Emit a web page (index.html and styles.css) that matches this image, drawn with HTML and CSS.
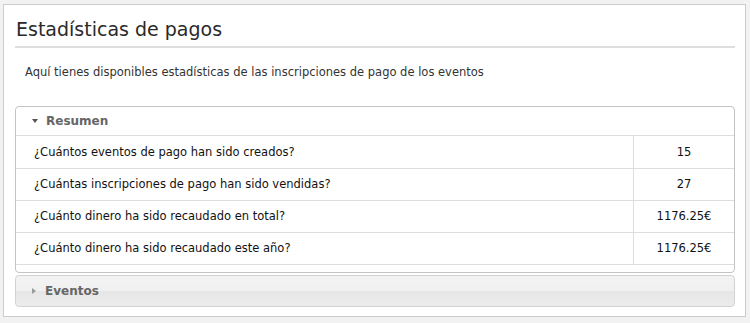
FILE: index.html
```html
<html>
    <head>
        <title>Estadísticas de pagos</title>
        <link rel="stylesheet" href="styles.css">
    </head>
    <body>
        <div class="panel">
            <h1 class="title">Estadísticas de pagos</h1>
            <p class="intro">Aquí tienes disponibles estadísticas de las inscripciones de pago de los eventos</p>
            <div class="section open">
                <div class="section-head">
                    <span class="arrow-down"></span>Resumen
                </div>
                <table class="stats">
                    <tr>
                        <td>¿Cuántos eventos de pago han sido creados?</td>
                        <td class="value">15</td>
                    </tr>
                    <tr>
                        <td>¿Cuántas inscripciones de pago han sido vendidas?</td>
                        <td class="value">27</td>
                    </tr>
                    <tr>
                        <td>¿Cuánto dinero ha sido recaudado en total?</td>
                        <td class="value">1176.25€</td>
                    </tr>
                    <tr>
                        <td>¿Cuánto dinero ha sido recaudado este año?</td>
                        <td class="value">1176.25€</td>
                    </tr>
                </table>
            </div>
            <div class="section closed">
                <div class="section-head">
                    <span class="arrow-right"></span>Eventos
                </div>
            </div>
        </div>
    </body>
</html>
```

FILE: styles.css
```css
body {
    background-color: #f2f2f2;
    font-family: "DejaVu Sans", Verdana, sans-serif;
    font-size: 11.5px;
    color: #222;
    margin: 0;
    padding: 0;
}
.panel {
    margin: 4px 4px 0 3px;
    height: 313px;
    box-sizing: border-box;
    border: 1px solid #cccccc;
    background-color: #fff;
    padding: 0 10px 0 11px;
}
.title {
    margin: 0;
    padding: 12px 0 5px 1px;
    font-size: 19px;
    line-height: 24px;
    font-weight: normal;
    color: #2a2a2a;
    border-bottom: 2px solid #dddddd;
}
.intro {
    margin: 16px 0 26px 10px;
    line-height: 16px;
    color: #333;
}
.section {
    border: 1px solid #c4c4c4;
    border-radius: 4px;
}
.section.open {
    padding-bottom: 7px;
}
.closed {
    margin-top: 2px;
    background: linear-gradient(#f3f3f3 0, #f0f0f0 50%, #e6e6e6 50%, #ececec 100%);
    border-color: #d2d2d2;
}
.section-head {
    height: 28px;
    line-height: 29px;
    padding-left: 16px;
    font-weight: bold;
    font-size: 12px;
    color: #666;
}
.closed .section-head {
    height: 30px;
    line-height: 31px;
}
.open .section-head {
    border-bottom: 1px solid #dddddd;
}
.arrow-down {
    display: inline-block;
    width: 0;
    height: 0;
    border-left: 3px solid transparent;
    border-right: 3px solid transparent;
    border-top: 4px solid #555;
    margin-right: 8px;
    vertical-align: 2px;
}
.arrow-right {
    display: inline-block;
    width: 0;
    height: 0;
    border-top: 3px solid transparent;
    border-bottom: 3px solid transparent;
    border-left: 4px solid #999;
    margin-right: 9px;
    vertical-align: 1px;
}
.stats {
    width: 100%;
    border-collapse: collapse;
    font-size: 11.5px;
}
.stats td {
    height: 32px;
    padding: 0 0 0 18px;
    border-bottom: 1px solid #dddddd;
    color: #111;
}
.stats td.value {
    width: 100px;
    padding: 0;
    text-align: center;
    border-left: 1px solid #dddddd;
}
```
